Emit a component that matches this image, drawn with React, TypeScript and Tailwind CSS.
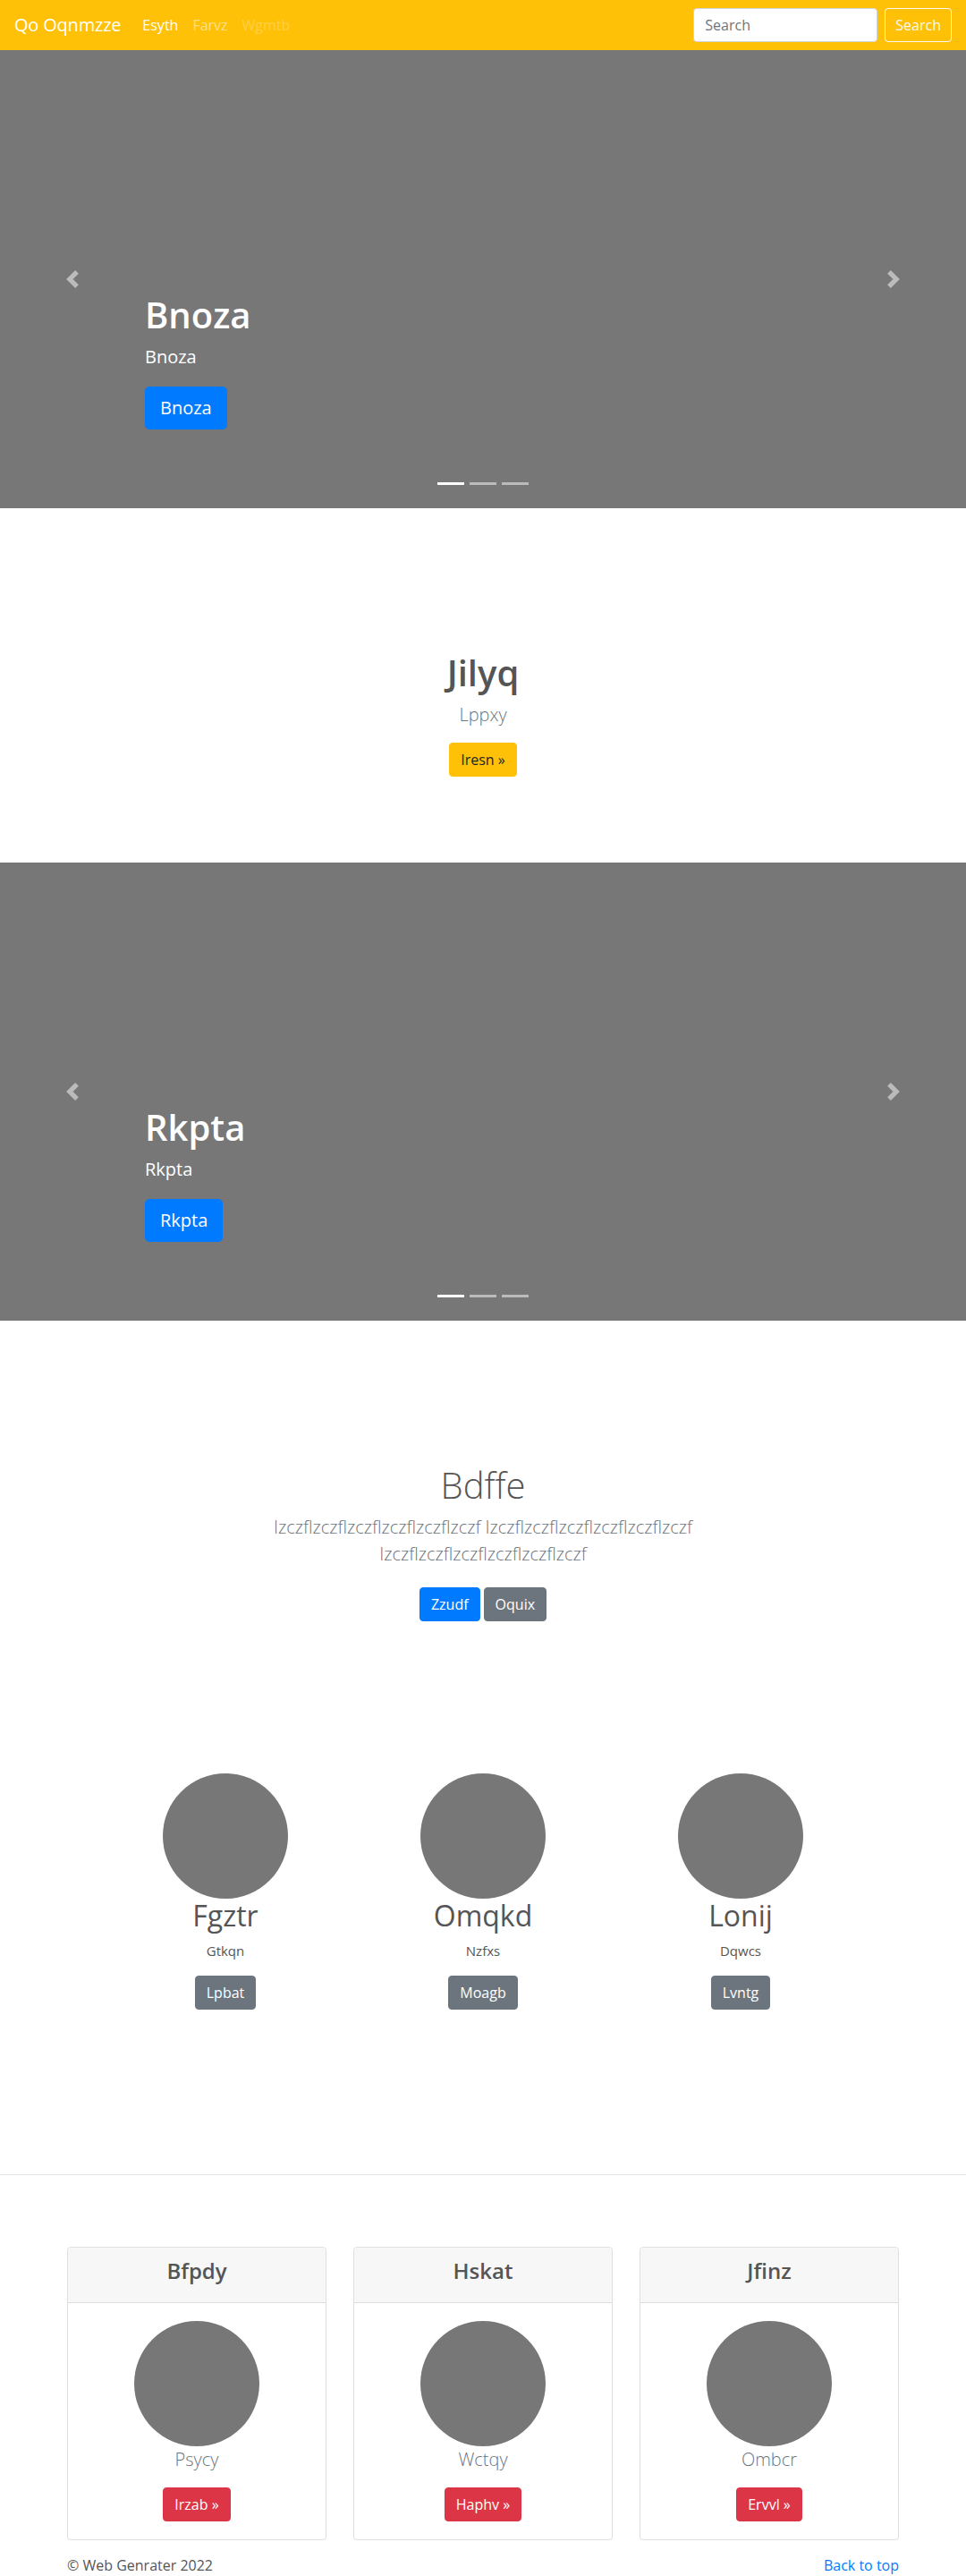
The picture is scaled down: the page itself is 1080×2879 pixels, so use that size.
import React from "react";

function Chevron({ dir }: { dir: "prev" | "next" }) {
    const d =
        dir === "prev"
            ? "M5.25 0l-4 4 4 4 1.5-1.5-2.5-2.5 2.5-2.5-1.5-1.5z"
            : "M2.75 0l-1.5 1.5 2.5 2.5-2.5 2.5 1.5 1.5 4-4-4-4z";
    return (
        <svg width="20" height="20" viewBox="0 0 8 8" fill="#fff">
            <path d={d} />
        </svg>
    );
}

function Slide({ title }: { title: string }) {
    return (
        <div className="relative h-[512px] bg-[#777] overflow-hidden">
            {/* controls */}
            <div className="absolute inset-y-0 left-0 w-[15%] flex items-center justify-center opacity-50">
                <Chevron dir="prev" />
            </div>
            <div className="absolute inset-y-0 right-0 w-[15%] flex items-center justify-center opacity-50">
                <Chevron dir="next" />
            </div>

            {/* caption */}
            <div className="absolute left-[15%] right-[15%] bottom-[88px] text-white text-left">
                <h1 className="text-[40px] leading-[48px] font-semibold mb-2">{title}</h1>
                <p className="text-[20px] leading-[30px] mb-[18px]">{title}</p>
                <div>
                    <a className="inline-block bg-[#007bff] border border-[#007bff] rounded-[5px] px-4 py-2 text-[20px] leading-[30px] text-white">
                        {title}
                    </a>
                </div>
            </div>

            {/* indicators */}
            <div className="absolute inset-x-0 bottom-[26px] flex justify-center gap-[6px]">
                <span className="block w-[30px] h-[3px] bg-white" />
                <span className="block w-[30px] h-[3px] bg-white/50" />
                <span className="block w-[30px] h-[3px] bg-white/50" />
            </div>
        </div>
    );
}

const people = [
    { name: "Fgztr", sub: "Gtkqn", btn: "Lpbat" },
    { name: "Omqkd", sub: "Nzfxs", btn: "Moagb" },
    { name: "Lonij", sub: "Dqwcs", btn: "Lvntg" },
];

const cards = [
    { title: "Bfpdy", sub: "Psycy", btn: "Irzab" },
    { title: "Hskat", sub: "Wctqy", btn: "Haphv" },
    { title: "Jfinz", sub: "Ombcr", btn: "Ervvl" },
];

export default function App() {
    return (
        <div className="min-h-screen bg-white text-[#555] font-['Open_Sans','Noto_Sans',sans-serif]">
            {/* Navbar */}
            <nav className="h-14 bg-[#ffc107] flex items-center px-4">
                <span className="text-[20px] leading-[30px] text-white mr-4 tracking-[-0.2px]">Qo Oqnmzze</span>
                <div className="flex items-center text-base">
                    <a className="px-2 text-white">Esyth</a>
                    <a className="px-2 text-white/50">Farvz</a>
                    <a className="px-2 text-white/25">Wgmtb</a>
                </div>
                <form className="ml-auto flex items-center gap-2">
                    <input
                        placeholder="Search"
                        className="w-[206px] h-[38px] bg-white border border-[#ced4da] rounded-[4px] px-3 text-base text-[#495057] placeholder:text-[#6c757d] outline-none"
                    />
                    <button
                        type="button"
                        className="h-[38px] px-[11px] border border-[#f8f9fa] rounded-[4px] text-[#f8f9fa] text-base"
                    >
                        Search
                    </button>
                </form>
            </nav>

            <Slide title="Bnoza" />

            {/* Jilyq */}
            <section className="pt-[160px] pb-[96px] text-center">
                <h1 className="text-[40px] leading-[48px] font-semibold mb-2">Jilyq</h1>
                <p className="text-[20px] leading-[30px] font-light text-[#6c757d] mb-4">Lppxy</p>
                <a className="inline-block bg-[#ffc107] border border-[#ffc107] rounded-[4px] px-3 py-1.5 text-base leading-6 text-[#212529]">
                    Iresn »
                </a>
            </section>

            <Slide title="Rkpta" />

            {/* Bdffe */}
            <section className="pt-[160px] text-center">
                <h1 className="text-[40px] leading-[48px] font-light mb-2">Bdffe</h1>
                <p className="max-w-[610px] mx-auto text-[20px] leading-[30px] font-light text-[#6c757d] mb-[22px]">
                    Izczflzczflzczflzczflzczflzczf Izczflzczflzczflzczflzczflzczf Izczflzczflzczflzczflzczflzczf
                </p>
                <div className="flex justify-center gap-1 my-2">
                    <a className="inline-block bg-[#007bff] border border-[#007bff] rounded-[4px] px-3 py-1.5 text-base leading-6 text-white">
                        Zzudf
                    </a>
                    <a className="inline-block bg-[#6c757d] border border-[#6c757d] rounded-[4px] px-3 py-1.5 text-base leading-6 text-white">
                        Oquix
                    </a>
                </div>
            </section>

            {/* People */}
            <div className="w-[864px] mx-auto mt-[170px] grid grid-cols-3 text-center">
                {people.map((p) => (
                    <div key={p.name} className="flex flex-col items-center">
                        <div className="w-[140px] h-[140px] rounded-full bg-[#777]" />
                        <h2 className="text-[32px] leading-[38px] mb-2">{p.name}</h2>
                        <p className="text-[15px] leading-6 mb-4">{p.sub}</p>
                        <a className="inline-block bg-[#6c757d] border border-[#6c757d] rounded-[4px] px-3 py-1.5 text-base leading-6 text-white">
                            {p.btn}
                        </a>
                    </div>
                ))}
            </div>

            <div className="mt-[184px] border-t border-[#e5e5e5]" />

            {/* Cards */}
            <div className="w-[930px] mx-auto mt-[80px] grid grid-cols-3 gap-[30px] text-center">
                {cards.map((c) => (
                    <div key={c.title} className="border border-[#dfdfdf] rounded-[4px] overflow-hidden">
                        <div className="bg-[#f7f7f7] border-b border-[#dfdfdf] px-5 py-3">
                            <h4 className="text-[24px] leading-[28.8px] font-semibold mb-2">{c.title}</h4>
                        </div>
                        <div className="p-5 flex flex-col items-center">
                            <div className="w-[140px] h-[140px] rounded-full bg-[#777]" />
                            <p className="text-[20px] leading-[30px] font-light text-[#6c757d] mb-4">{c.sub}</p>
                            <a className="inline-block bg-[#dc3545] border border-[#dc3545] rounded-[4px] px-3 py-1.5 text-base leading-6 text-white">
                                {c.btn} »
                            </a>
                        </div>
                    </div>
                ))}
            </div>

            {/* Footer */}
            <footer className="w-[930px] mx-auto mt-4 pb-4 flex justify-between text-base leading-6">
                <p>© Web Genrater 2022</p>
                <a className="text-[#007bff]">Back to top</a>
            </footer>
        </div>
    );
}
